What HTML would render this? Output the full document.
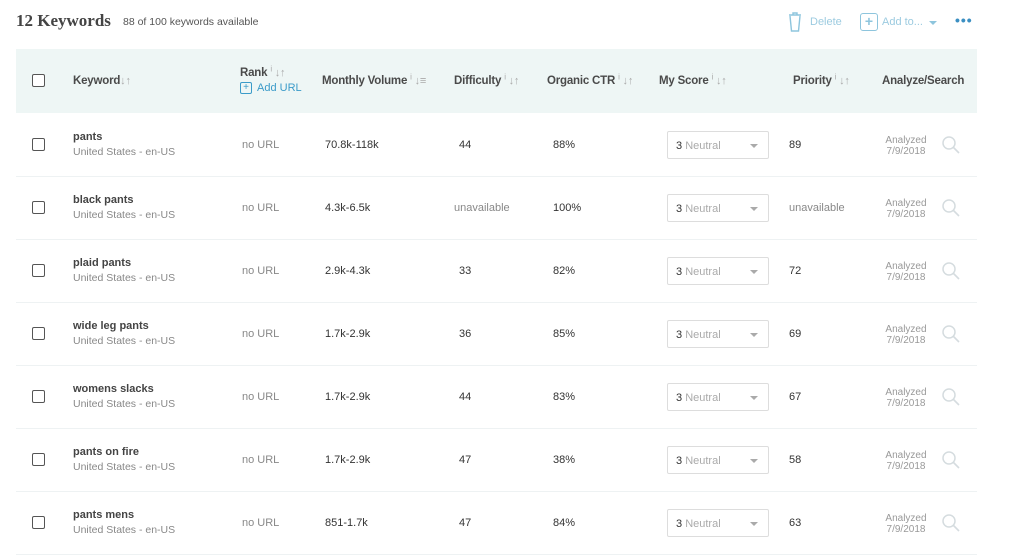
<!DOCTYPE html>
<html><head><style>
*{margin:0;padding:0;box-sizing:border-box}
body{width:1024px;height:550px;background:#fff;font-family:"Liberation Sans",sans-serif;color:#333;position:relative;overflow:hidden}
.a{position:absolute;white-space:nowrap}
.h{font-size:11.5px;color:#4a4a4a;font-weight:bold;letter-spacing:-0.2px;line-height:14px}
.s{color:#aaa;font-size:11px;font-weight:normal}
.s sup{font-size:8px;line-height:0}
.cb{position:absolute;width:13px;height:13px;border:1.3px solid #555;border-radius:2px;background:#fff}
.c{font-size:11px;color:#333}
.g{color:#888}
.dd{position:absolute;left:667px;width:102px;height:28px;border:1px solid #ddd;border-radius:2px;font-size:11px;padding:8px 0 0 8px;color:#333}
.dd span{color:#aaa}
.dd i{position:absolute;right:10px;top:12px;border:4px solid transparent;border-top:4px solid #aaa}
.an{font-size:10px;color:#999;text-align:center;line-height:11px;width:50px}
.sep{position:absolute;left:16px;width:961px;height:1px;background:#eef2f3}
</style></head><body>
<div class="a" style="left:16px;top:11px;font-family:'Liberation Serif',serif;font-weight:bold;font-size:17px;color:#444">12 Keywords</div>
<div class="a" style="left:123px;top:16px;font-size:10.5px;color:#555">88 of 100 keywords available</div>
<svg class="a" style="left:788px;top:12px" width="14" height="20" viewBox="0 0 14 20"><path d="M1 3h12M5 3V1h4v2M2 4l1.5 15h7L12 4" fill="none" stroke="#8ec5dd" stroke-width="1.4"/></svg>
<div class="a" style="left:810px;top:16px;font-size:11px;color:#9ccbe0">Delete</div>
<div class="a" style="left:860px;top:13px;width:18px;height:18px;border:1.3px solid #8ec5dd;border-radius:3px;color:#8ec5dd;font-size:14px;text-align:center;line-height:15px;font-weight:bold">+</div>
<div class="a" style="left:882px;top:16px;font-size:11px;color:#9ccbe0">Add to...</div>
<div class="a" style="left:929px;top:21px;border:4px solid transparent;border-top:4px solid #8ec5dd"></div>
<div class="a" style="left:955px;top:12px;font-size:14px;color:#3b8fc2;letter-spacing:1px;font-weight:bold">•••</div>
<div class="a" style="left:16px;top:49px;width:961px;height:64px;background:#eef6f5"></div>
<div class="cb" style="left:32px;top:74px"></div>
<div class="a h" style="left:73px;top:74px">Keyword<span class="s">↓↑</span></div>
<div class="a h" style="left:240px;top:66px">Rank <span class="s"><sup>i</sup> ↓↑</span></div>
<div class="a" style="left:240px;top:82px;width:12px;height:12px;border:1px solid #3b9bc9;border-radius:2px;font-size:10px;color:#3b9bc9;text-align:center;line-height:10px">+</div>
<div class="a" style="left:257px;top:82px;font-size:11px;color:#3b9bc9">Add URL</div>
<div class="a h" style="left:322px;top:74px">Monthly Volume <span class="s"><sup>i</sup> ↓≡</span></div>
<div class="a h" style="left:454px;top:74px">Difficulty <span class="s"><sup>i</sup> ↓↑</span></div>
<div class="a h" style="left:547px;top:74px">Organic CTR <span class="s"><sup>i</sup> ↓↑</span></div>
<div class="a h" style="left:659px;top:74px">My Score <span class="s"><sup>i</sup> ↓↑</span></div>
<div class="a h" style="left:793px;top:74px">Priority <span class="s"><sup>i</sup> ↓↑</span></div>
<div class="a h" style="left:882px;top:74px">Analyze/Search</div>
<div id="rows"></div>
<script>
var d=[["pants","70.8k-118k","44","88%","89"],["black pants","4.3k-6.5k","unavailable","100%","unavailable"],["plaid pants","2.9k-4.3k","33","82%","72"],["wide leg pants","1.7k-2.9k","36","85%","69"],["womens slacks","1.7k-2.9k","44","83%","67"],["pants on fire","1.7k-2.9k","47","38%","58"],["pants mens","851-1.7k","47","84%","63"]];
var h="";
d.forEach(function(r,i){var y=113+i*63,m=y+32;
h+='<div class="sep" style="top:'+(y+63)+'px"></div>';
h+='<div class="cb" style="left:32px;top:'+(m-7)+'px"></div>';
h+='<div class="a c" style="left:73px;top:'+(m-14)+'px;font-weight:bold;color:#444">'+r[0]+'</div>';
h+='<div class="a c g" style="left:73px;top:'+(m+1)+'px;font-size:10.5px">United States - en-US</div>';
h+='<div class="a c g" style="left:242px;top:'+(m-6)+'px">no URL</div>';
h+='<div class="a c" style="left:325px;top:'+(m-6)+'px">'+r[1]+'</div>';
h+='<div class="a c'+(r[2]=="unavailable"?" g":"")+'" style="left:'+(r[2]=="unavailable"?454:459)+'px;top:'+(m-6)+'px">'+r[2]+'</div>';
h+='<div class="a c" style="left:553px;top:'+(m-6)+'px">'+r[3]+'</div>';
h+='<div class="dd" style="top:'+(m-14)+'px">3 <span>Neutral</span><i></i></div>';
h+='<div class="a c'+(r[4]=="unavailable"?" g":"")+'" style="left:789px;top:'+(m-6)+'px">'+r[4]+'</div>';
h+='<div class="a an" style="left:881px;top:'+(m-10)+'px">Analyzed<br>7/9/2018</div>';
h+='<svg class="a" style="left:941px;top:'+(m-10)+'px" width="20" height="20" viewBox="0 0 20 20"><circle cx="8" cy="8" r="6" fill="none" stroke="#d5dcdf" stroke-width="1.5"/><path d="M12.5 12.5L18 18" stroke="#d5dcdf" stroke-width="1.6"/></svg>';
});
document.getElementById("rows").innerHTML=h;
</script>
</body></html>
